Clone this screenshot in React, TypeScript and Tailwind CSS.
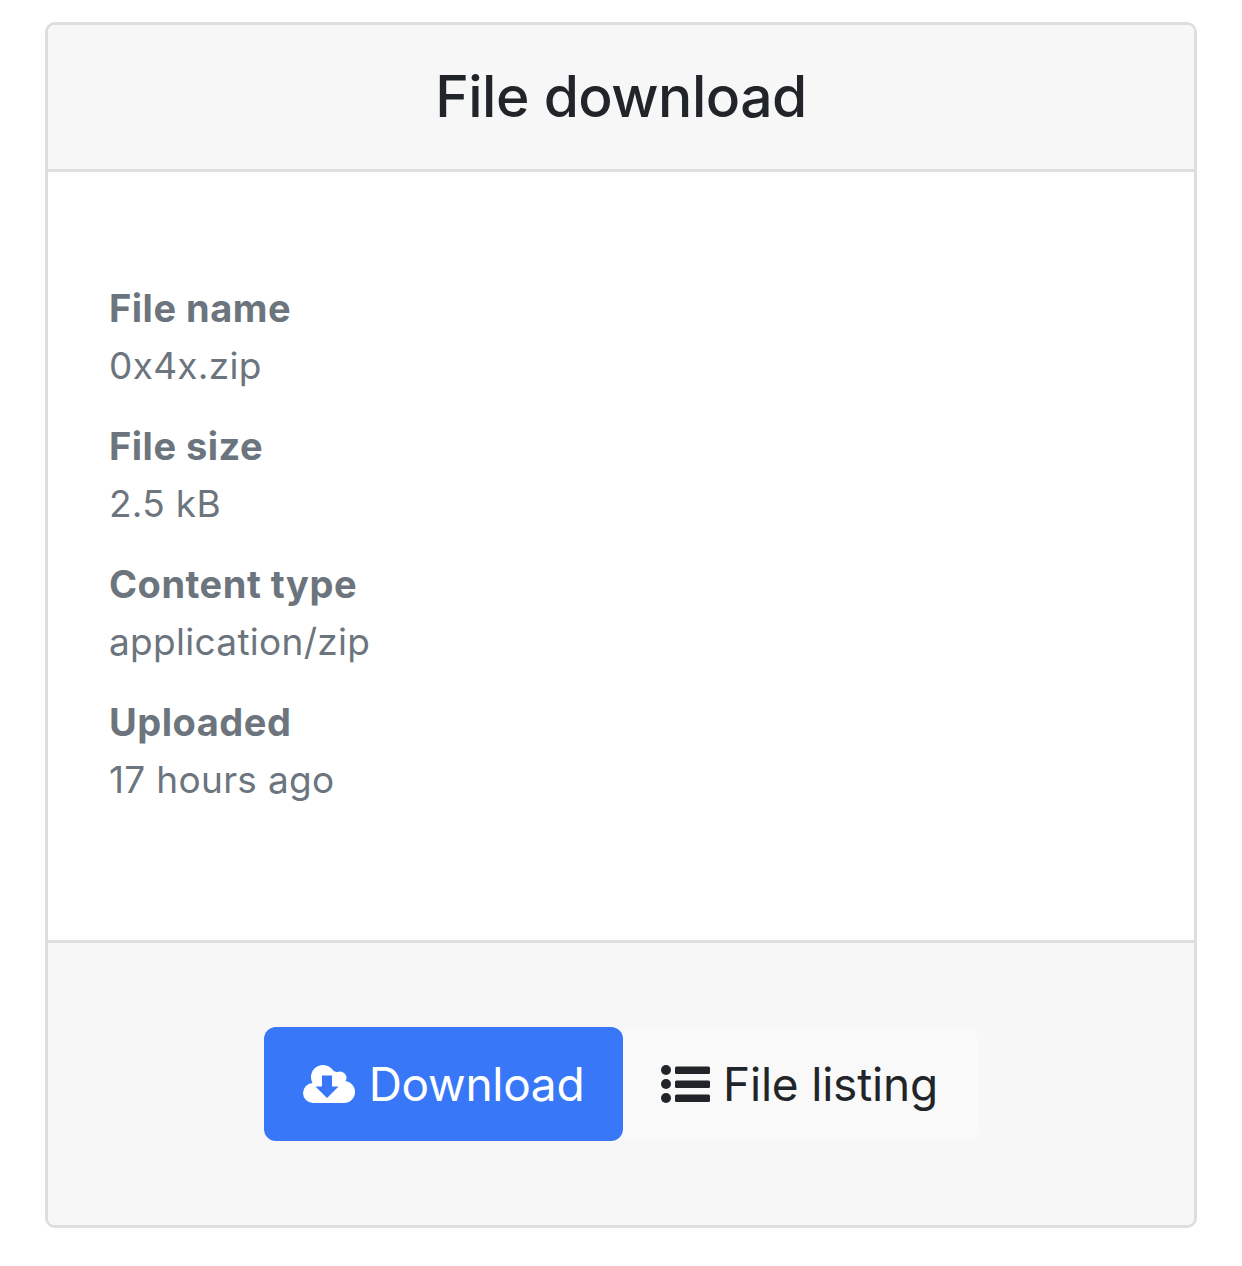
const details = [
  { label: 'File name', value: '0x4x.zip' },
  { label: 'File size', value: '2.5 kB' },
  { label: 'Content type', value: 'application/zip' },
  { label: 'Uploaded', value: '17 hours ago' },
];

function CloudDownloadIcon() {
  return (
    <svg viewBox="0 0 52 38" className="h-[38px] w-[52px] shrink-0" aria-hidden="true">
      <g fill="#ffffff">
        <circle cx="10" cy="28" r="10" />
        <circle cx="20" cy="12" r="12" />
        <circle cx="29" cy="18" r="12" />
        <circle cx="37" cy="13" r="6.5" />
        <circle cx="41" cy="27" r="11" />
        <rect x="10" y="18" width="31" height="20" />
      </g>
      <path d="M19 10.5h10v11h6.5L24 33 12.5 21.5H19z" fill="#3878f8" />
    </svg>
  );
}

function ListIcon() {
  return (
    <svg viewBox="0 0 49 38" className="h-[38px] w-[49px] shrink-0" aria-hidden="true">
      <g fill="#212529">
        <circle cx="5" cy="5" r="5" />
        <circle cx="5" cy="19" r="5" />
        <circle cx="5" cy="33" r="5" />
        <rect x="14" y="1.5" width="35" height="7.5" rx="1.5" />
        <rect x="14" y="15.5" width="35" height="7.5" rx="1.5" />
        <rect x="14" y="29.5" width="35" height="7.5" rx="1.5" />
      </g>
    </svg>
  );
}

export default function App() {
  return (
    <div className="min-h-screen bg-white px-[45px] pt-[22px] font-['Inter','Liberation_Sans',sans-serif]">
      <div className="overflow-hidden rounded-[10px] border-[3px] border-[#dedede] bg-white">
        {/* Header */}
        <div className="h-[147px] border-b-[3px] border-[#dedede] bg-[#f7f7f7] pt-[38px] text-center">
          <h1 className="text-[57px] leading-[67px] font-medium tracking-[-0.5px] text-[#212529]">File download</h1>
        </div>

        {/* Details */}
        <div className="h-[768px] px-[61px] pt-[108px]">
          <div className="flex flex-col gap-[24px]">
            {details.map((d) => (
              <div key={d.label}>
                <div className="text-[38px] leading-[57px] font-bold tracking-[0.5px] text-[#6c757d]">{d.label}</div>
                <div className="text-[37px] leading-[57px] tracking-[0.3px] text-[#6c757d]">{d.value}</div>
              </div>
            ))}
          </div>
        </div>

        {/* Footer */}
        <div className="flex h-[285px] justify-center border-t-[3px] border-[#dedede] bg-[#f7f7f7] pt-[84px]">
          <div className="flex h-[114px]">
            <button className="flex w-[359px] items-center justify-center gap-[14px] rounded-[12px] bg-[#3878f8] text-[46px] tracking-[-0.3px] text-white">
              <CloudDownloadIcon />
              Download
            </button>
            <button className="flex w-[355px] items-center justify-center gap-[13px] rounded-[12px] bg-[#f9f9f9] pr-[2px] text-[46px] tracking-[-0.2px] text-[#212529]">
              <ListIcon />
              File listing
            </button>
          </div>
        </div>
      </div>
    </div>
  );
}
